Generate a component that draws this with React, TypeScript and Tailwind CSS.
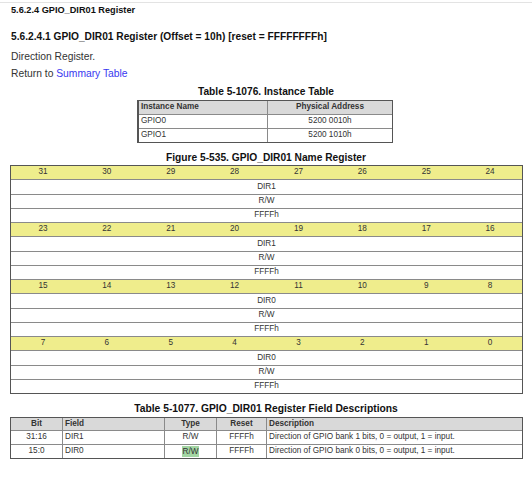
import React from "react";

const font = { fontFamily: '"Liberation Sans", Arial, sans-serif' };

const bitRows = [
  { bits: [31, 30, 29, 28, 27, 26, 25, 24], field: "DIR1" },
  { bits: [23, 22, 21, 20, 19, 18, 17, 16], field: "DIR1" },
  { bits: [15, 14, 13, 12, 11, 10, 9, 8], field: "DIR0" },
  { bits: [7, 6, 5, 4, 3, 2, 1, 0], field: "DIR0" },
];

const RegisterBlock = ({ bits, field, first }: { bits: number[]; field: string; first: boolean }) => {
  return (
    <>
      <div className={`grid grid-cols-8 bg-[#efed8c] ${first ? "h-[13.25px]" : "h-[14.25px] border-t border-[#8a8a8a]"}`}>
        {bits.map((b) => (
          <div key={b} className="flex items-center justify-center text-[8.2px] text-[#333]">
            {b}
          </div>
        ))}
      </div>
      <div className="flex items-center justify-center h-[14.25px] border-t border-[#8a8a8a] text-[8.2px] text-[#333]">
        {field}
      </div>
      <div className="flex items-center justify-center h-[14.25px] border-t border-[#8a8a8a] text-[8.2px] text-[#333]">
        R/W
      </div>
      <div className="flex items-center justify-center h-[14.25px] border-t border-[#8a8a8a] text-[8.2px] text-[#333]">
        FFFFh
      </div>
    </>
  );
};

export default function App() {
  return (
    <div style={font} className="w-[532px] h-[479px] bg-white overflow-hidden">
      <div className="h-[2px]" />
      <div className="h-px bg-[#e3e3e3]" />

      <div className="pl-[11px] h-[15px] leading-[15px] text-[9.2px] font-bold text-[#111]">
        5.6.2.4 GPIO_DIR01 Register
      </div>

      <div className="pl-[11px] mt-[12px] h-[14px] leading-[14px] text-[10.2px] font-bold text-[#111]">
        5.6.2.4.1 GPIO_DIR01 Register (Offset = 10h) [reset = FFFFFFFFh]
      </div>

      <div className="pl-[11px] mt-[6px] h-[13px] leading-[13px] text-[10.3px] text-[#333]">
        Direction Register.
      </div>

      <div className="pl-[11px] mt-[4px] h-[14px] leading-[14px] text-[10.3px] text-[#333]">
        Return to <span className="text-[#3838f0]">Summary Table</span>
      </div>

      <div className="mt-[3px] h-[15px] leading-[15px] text-center text-[10.2px] font-bold text-[#111]">
        Table 5-1076. Instance Table
      </div>

      <div className="mt-px ml-[137px] w-[256px] border border-[#555] border-l-2 text-[8.2px] text-[#333]">
        <div className="grid grid-cols-[129px_1fr] h-[13px] bg-[#d9d9d9] font-bold">
          <div className="flex items-center pl-[2px] border-r border-[#8a8a8a]">Instance Name</div>
          <div className="flex items-center justify-center">Physical Address</div>
        </div>
        <div className="grid grid-cols-[129px_1fr] h-[14px] border-t border-[#8a8a8a]">
          <div className="flex items-center pl-[2px] border-r border-[#8a8a8a]">GPIO0</div>
          <div className="flex items-center justify-center">5200 0010h</div>
        </div>
        <div className="grid grid-cols-[129px_1fr] h-[14px] border-t border-[#8a8a8a]">
          <div className="flex items-center pl-[2px] border-r border-[#8a8a8a]">GPIO1</div>
          <div className="flex items-center justify-center">5200 1010h</div>
        </div>
      </div>

      <div className="mt-[8px] h-[14px] leading-[14px] text-center text-[10.2px] font-bold text-[#111]">
        Figure 5-535. GPIO_DIR01 Name Register
      </div>

      <div className="ml-[10px] w-[513px] border border-[#555]">
        {bitRows.map((r, i) => (
          <RegisterBlock key={i} bits={r.bits} field={r.field} first={i === 0} />
        ))}
      </div>

      <div className="mt-[8px] h-[14px] leading-[14px] text-center text-[10.3px] font-bold text-[#111]">
        Table 5-1077. GPIO_DIR01 Register Field Descriptions
      </div>

      <div className="mt-px ml-[10px] w-[513px] border border-[#555] text-[8.2px] text-[#333]">
        <div className="grid grid-cols-[52px_102px_52px_50px_1fr] h-[12px] bg-[#d9d9d9] font-bold">
          <div className="flex items-center justify-center border-r border-[#8a8a8a]">Bit</div>
          <div className="flex items-center pl-[2px] border-r border-[#8a8a8a]">Field</div>
          <div className="flex items-center justify-center border-r border-[#8a8a8a]">Type</div>
          <div className="flex items-center justify-center border-r border-[#8a8a8a]">Reset</div>
          <div className="flex items-center pl-[2px]">Description</div>
        </div>
        <div className="grid grid-cols-[52px_102px_52px_50px_1fr] h-[14px] border-t border-[#8a8a8a]">
          <div className="flex items-center justify-center border-r border-[#8a8a8a]">31:16</div>
          <div className="flex items-center pl-[2px] border-r border-[#8a8a8a]">DIR1</div>
          <div className="flex items-center justify-center border-r border-[#8a8a8a]">R/W</div>
          <div className="flex items-center justify-center border-r border-[#8a8a8a]">FFFFh</div>
          <div className="flex items-center pl-[2px]">Direction of GPIO bank 1 bits, 0 = output, 1 = input.</div>
        </div>
        <div className="grid grid-cols-[52px_102px_52px_50px_1fr] h-[14px] border-t border-[#8a8a8a]">
          <div className="flex items-center justify-center border-r border-[#8a8a8a]">15:0</div>
          <div className="flex items-center pl-[2px] border-r border-[#8a8a8a]">DIR0</div>
          <div className="flex items-center justify-center border-r border-[#8a8a8a]">
            <span className="bg-[#a3d6a3] px-px leading-[11px]">R/W</span>
          </div>
          <div className="flex items-center justify-center border-r border-[#8a8a8a]">FFFFh</div>
          <div className="flex items-center pl-[2px]">Direction of GPIO bank 0 bits, 0 = output, 1 = input.</div>
        </div>
      </div>
    </div>
  );
}
